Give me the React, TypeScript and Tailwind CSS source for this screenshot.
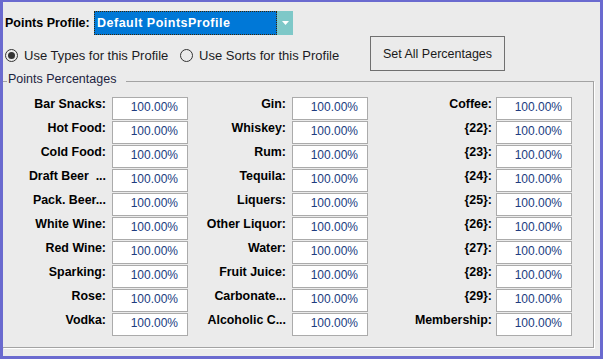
import React from 'react'

const col1 = ['Bar Snacks:', 'Hot Food:', 'Cold Food:', 'Draft Beer  ...', 'Pack. Beer...', 'White Wine:', 'Red Wine:', 'Sparking:', 'Rose:', 'Vodka:']
const col2 = ['Gin:', 'Whiskey:', 'Rum:', 'Tequila:', 'Liquers:', 'Other Liquor:', 'Water:', 'Fruit Juice:', 'Carbonate...', 'Alcoholic C...']
const col3 = ['Coffee:', '{22}:', '{23}:', '{24}:', '{25}:', '{26}:', '{27}:', '{28}:', '{29}:', 'Membership:']

function PctBox({ value }: { value: string }) {
  return (
    <div className="w-[76px] h-[23px] border border-[#ababab] bg-white text-right pr-[9px] pt-[2px] text-[12px] leading-[14px] font-normal text-[#203c80]">
      {value}
    </div>
  )
}

function Radio({ checked, label }: { checked?: boolean; label: string }) {
  return (
    <div className="flex items-center gap-[6px]">
      <span className="w-[13px] h-[13px] rounded-full border border-[#333333] flex items-center justify-center">
        {checked && <span className="w-[7px] h-[7px] rounded-full bg-[#333333]" />}
      </span>
      <span className="text-[13px] leading-[15px] text-[#1b1b24]">{label}</span>
    </div>
  )
}

export default function App() {
  return (
    <div className="w-[603px] h-[359px] bg-[#6a6acf] pl-[3px] pt-[2px] pr-[3px] pb-[3px] font-['Liberation_Sans',Arial,sans-serif]">
      <div className="h-full bg-[#ebebeb] flex flex-col">
        <div className="mt-[9px] h-[24px] flex items-center pl-[2px]">
          <span className="w-[89px] text-[12.5px] leading-[14px] font-bold text-black whitespace-nowrap">Points Profile:</span>
          <div className="w-[199px] h-[24px] flex">
            <div className="flex-1 bg-[#0078d7] border border-dotted border-[#3a2606] flex items-center pl-[2px] text-white font-bold text-[12.5px] leading-[14px] tracking-[0.5px]">
              Default PointsProfile
            </div>
            <div className="w-[16px] bg-[#7ec8c8] flex items-center justify-center">
              <svg width="7" height="4" viewBox="0 0 7 4">
                <path d="M0 0h7L3.5 4z" fill="#ffffff" />
              </svg>
            </div>
          </div>
        </div>

        <div className="mt-[1px] h-[35px] flex items-center pl-[2px]">
          <div className="w-[175px] pt-[3px]">
            <Radio checked label="Use Types for this Profile" />
          </div>
          <div className="w-[190px] pt-[3px]">
            <Radio label="Use Sorts for this Profile" />
          </div>
          <button className="w-[135px] h-[35px] border border-[#707070] bg-[#ebebeb] text-[12.5px] leading-[14px] text-[#1a1a1a]">
            Set All Percentages
          </button>
        </div>

        <div className="mt-[10px] mb-[8px] mr-[6px] flex-1 border border-l-0 border-[#a3a3a3] shadow-[1px_1px_0_#ffffff] flex flex-col">
          <div className="-mt-[10px] ml-[4px] w-fit bg-[#ebebeb] pl-[1px] pr-[10px] text-[12.5px] leading-[14px] text-[#1c2340]">
            Points Percentages
          </div>
          <div className="mt-[11px] flex flex-col gap-[1px]">
            {col1.map((l1, i) => (
              <div key={i} className="flex h-[23px] text-[12.4px] leading-[14px] font-bold text-black">
                <span className="w-[103px] text-right whitespace-pre overflow-hidden">{l1}</span>
                <div className="ml-[6px]"><PctBox value="100.00%" /></div>
                <span className="w-[98px] text-right whitespace-pre overflow-hidden">{col2[i]}</span>
                <div className="ml-[6px]"><PctBox value="100.00%" /></div>
                <span className="w-[124px] text-right whitespace-pre overflow-hidden">{col3[i]}</span>
                <div className="ml-[4px]"><PctBox value="100.00%" /></div>
              </div>
            ))}
          </div>
        </div>
      </div>
    </div>
  )
}
